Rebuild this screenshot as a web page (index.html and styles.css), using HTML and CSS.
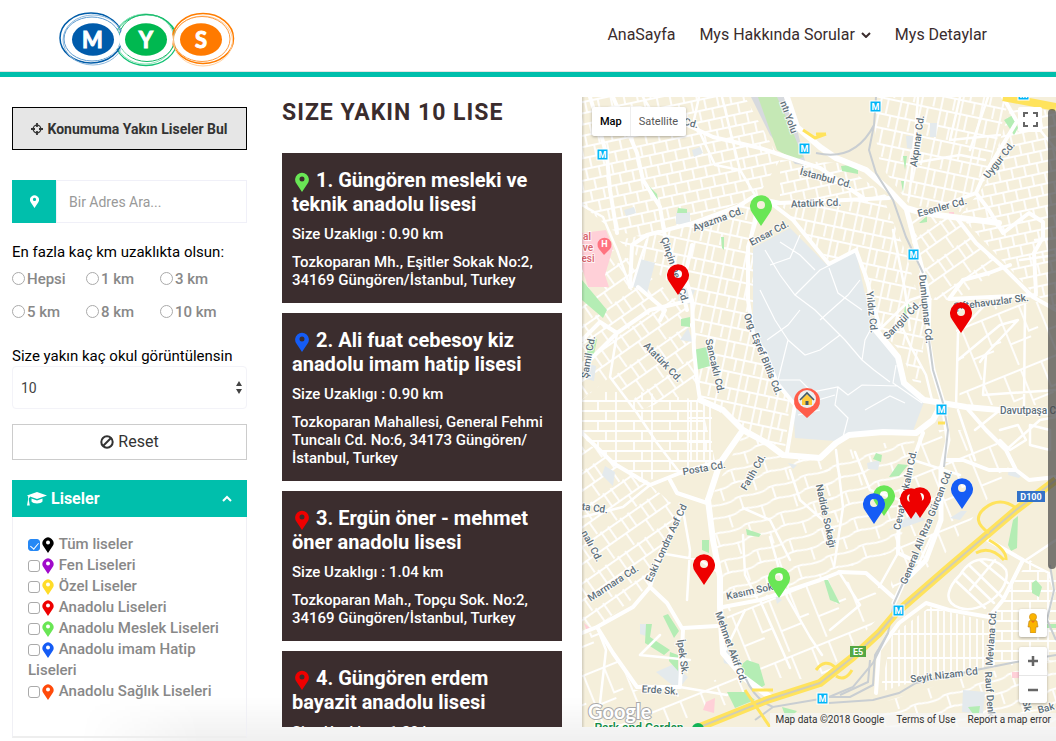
FILE: index.html
```html
<!DOCTYPE html>
<html lang="tr">
<head>
<meta charset="utf-8">
<meta name="viewport" content="width=device-width, initial-scale=1">
<title>MYS - Liseler</title>
<link rel="stylesheet" href="styles.css">
</head>
<body>
<svg class="defs" aria-hidden="true">
  <symbol id="pin" viewBox="0 0 22 32"><path fill="currentColor" fill-rule="evenodd" d="M11 32 2 18.500A11 11 0 1 1 20 18.500ZM11 7a4 4 0 1 0 0 8 4 4 0 0 0 0-8Z"/></symbol>
</svg>

<header class="site-header">
  <a class="logo" href="#" aria-label="MYS">
    <svg viewBox="59 11 177 57" width="177" height="57">
      <g fill="none">
        <ellipse cx="146" cy="40" rx="31" ry="25.500" stroke="#12c274" stroke-width="1.300"/>
        <ellipse cx="145" cy="39" rx="29" ry="25" stroke="#8fe3b9"/>
        <ellipse cx="147" cy="38" rx="28" ry="23.500" stroke="#12b865"/>
        <ellipse cx="203" cy="38.500" rx="30.500" ry="25" stroke="#ff7d00" stroke-width="1.500"/>
        <ellipse cx="203" cy="41" rx="29.500" ry="25" stroke="#ffd0a0"/>
        <ellipse cx="202" cy="39" rx="28" ry="22.500" stroke="#ff9a3c"/>
        <ellipse cx="91" cy="38" rx="31" ry="25" stroke="#005ca8" stroke-width="1.500"/>
        <ellipse cx="93" cy="40" rx="30" ry="25" stroke="#8fb9dd"/>
        <ellipse cx="92" cy="39" rx="28" ry="22" stroke="#5d9bd0"/>
      </g>
      <ellipse cx="93" cy="39.500" rx="27" ry="20.500" fill="#fff"/>
      <ellipse cx="146" cy="39.500" rx="27" ry="20.500" fill="#fff"/>
      <ellipse cx="201" cy="39.500" rx="27" ry="20.500" fill="#fff"/>
      <ellipse cx="93" cy="39.500" rx="21" ry="16.300" fill="#005bab"/>
      <ellipse cx="146" cy="39.500" rx="21" ry="16.300" fill="#00b850"/>
      <ellipse cx="201" cy="39.500" rx="21" ry="16.300" fill="#ff7a00"/>
      <g class="logo-letter"><text x="92.500" y="47.500">M</text><text x="146" y="47.500">Y</text><text x="201" y="47.500">S</text></g>
    </svg>
  </a>
  <nav class="nav">
    <a href="#">AnaSayfa</a>
    <a href="#">Mys Hakkında Sorular <svg class="caret" viewBox="0 0 10 6"><path d="M1 1l4 4 4-4"/></svg></a>
    <a href="#">Mys Detaylar</a>
  </nav>
</header>

<main class="layout">
  <form class="sidebar">
    <button class="locate" type="button">
      <svg viewBox="0 0 12 12" width="12" height="12"><circle cx="6" cy="6" r="3.800" fill="none" stroke="currentColor" stroke-width="1.300"/><path d="M6 0v4M6 8v4M0 6h4M8 6h4" stroke="currentColor" stroke-width="1.800"/></svg>
      Konumuma Yakın Liseler Bul
    </button>
    <div class="search">
      <span class="search-icon"><svg viewBox="0 0 22 32" width="9" height="13"><use href="#pin"/></svg></span>
      <input type="text" placeholder="Bir Adres Ara..." aria-label="Adres">
    </div>
    <fieldset class="distance">
      <legend>En fazla kaç km uzaklıkta olsun:</legend>
      <div class="options">
        <label><input type="radio" name="km">Hepsi</label>
        <label><input type="radio" name="km">1 km</label>
        <label><input type="radio" name="km">3 km</label>
        <label><input type="radio" name="km">5 km</label>
        <label><input type="radio" name="km">8 km</label>
        <label><input type="radio" name="km">10 km</label>
      </div>
    </fieldset>
    <label class="field-label" for="count">Size yakın kaç okul görüntülensin</label>
    <div class="select">
      <select id="count"><option>10</option><option>20</option></select>
      <svg viewBox="0 0 6 13" width="6" height="13"><path d="M3 0l3 5H0zM3 13l3-5H0z" fill="#444"/></svg>
    </div>
    <button class="reset" type="reset">
      <svg viewBox="0 0 14 14" width="14" height="14"><g fill="none" stroke="currentColor" stroke-width="2"><circle cx="7" cy="7" r="5.700"/><path d="M3 11l8-8"/></g></svg>
      Reset
    </button>
    <section class="panel">
      <button class="panel-head" type="button">
        <svg viewBox="0 0 20 14" width="20" height="14" fill="currentColor"><path d="M10 0l10 3.500-10 3.500L3 4.600v.700L1.800 6v2l1 5.500H0L1 8V6l.2-1.500L0 3.500z"/><path d="M4.500 6.500L10 8.400l5.500-1.900v3C14 12 6 12 4.500 9.500z"/></svg>
        <span>Liseler</span>
        <svg class="chevron" viewBox="0 0 10 7" width="10" height="7"><path d="M1 6l4-4 4 4" fill="none" stroke="currentColor" stroke-width="2"/></svg>
      </button>
      <div class="panel-body">
        <label class="black"><input type="checkbox" checked><svg><use href="#pin"/></svg> <span>Tüm liseler</span></label>
        <label class="purple"><input type="checkbox"><svg><use href="#pin"/></svg> <span>Fen Liseleri</span></label>
        <label class="yellow"><input type="checkbox"><svg><use href="#pin"/></svg> <span>Özel Liseler</span></label>
        <label class="red"><input type="checkbox"><svg><use href="#pin"/></svg> <span>Anadolu Liseleri</span></label>
        <label class="green"><input type="checkbox"><svg><use href="#pin"/></svg> <span>Anadolu Meslek Liseleri</span></label>
        <label class="blue"><input type="checkbox"><svg><use href="#pin"/></svg> <span>Anadolu imam Hatip Liseleri</span></label>
        <label class="orange"><input type="checkbox"><svg><use href="#pin"/></svg> <span>Anadolu Sağlık Liseleri</span></label>
      </div>
    </section>
  </form>

  <section class="results">
    <h2>SIZE YAKIN 10 LISE</h2>
    <div class="cards">
      <article class="card"><h3><svg class="green"><use href="#pin"/></svg> 1. Güngören mesleki ve teknik anadolu lisesi</h3><p>Size Uzaklıgı : 0.90 km</p><p>Tozkoparan Mh., Eşitler Sokak No:2, 34169 Güngören/İstanbul, Turkey</p></article>
      <article class="card"><h3><svg class="blue"><use href="#pin"/></svg> 2. Ali fuat cebesoy kiz anadolu imam hatip lisesi</h3><p>Size Uzaklıgı : 0.90 km</p><p>Tozkoparan Mahallesi, General Fehmi Tuncalı Cd. No:6, 34173 Güngören/<wbr>İstanbul, Turkey</p></article>
      <article class="card"><h3><svg class="red"><use href="#pin"/></svg> 3. Ergün öner - mehmet öner anadolu lisesi</h3><p>Size Uzaklıgı : 1.04 km</p><p>Tozkoparan Mah., Topçu Sok. No:2, 34169 Güngören/İstanbul, Turkey</p></article>
      <article class="card"><h3><svg class="red"><use href="#pin"/></svg> 4. Güngören erdem bayazit anadolu lisesi</h3><p>Size Uzaklıgı : 1.20 km</p></article>
    </div>
  </section>

  <section class="map" aria-label="Harita">
    <svg class="map-canvas" viewBox="582 97 474 630" preserveAspectRatio="xMinYMin slice">
      <defs>
        <pattern id="ga" width="26" height="22" patternUnits="userSpaceOnUse" patternTransform="rotate(-12)"><path d="M0 1H26M0 12H26M5 1V12M18 1V12M11 12V23M24 12V23" class="lane"/></pattern>
        <pattern id="gb" width="20" height="30" patternUnits="userSpaceOnUse" patternTransform="rotate(12)"><path d="M0 2H20M0 18H20M3 0V30M10 2V18M15 18V32" class="lane"/></pattern>
        <pattern id="gc" width="36" height="20" patternUnits="userSpaceOnUse"><path d="M0 1H36M0 11H36M4 0V20M22 1V11M30 11V21" class="lane"/></pattern>
        <pattern id="gd" width="24" height="30" patternUnits="userSpaceOnUse" patternTransform="rotate(-35)"><path d="M0 2H24M0 16H24M4 0V16M15 16V32M19 0V16" class="lane"/></pattern>
        <pattern id="ge" width="13" height="48" patternUnits="userSpaceOnUse"><path d="M2 0V48M8 0V48M0 10H13M0 34H13" class="lane"/></pattern>
        <pattern id="gf" width="34" height="28" patternUnits="userSpaceOnUse" patternTransform="rotate(-18)"><path d="M0 2C9-3 18 7 34 2M0 15C9 10 18 20 34 15M6 2V15M24 15V30" class="lane"/></pattern>
        <pattern id="gg" width="40" height="60" patternUnits="userSpaceOnUse" patternTransform="rotate(-22)"><path d="M0 5H40M8 5V60M30 5V32H40M8 38H30" class="lane"/></pattern>
      </defs>
      <rect x="582" y="97" width="474" height="630" fill="#f5efdb"/>

      <!-- neighbourhood street grids -->
      <path fill="url(#ga)" d="M582 97H745L780 160 758 196 680 225 645 238 612 230 582 205Z"/>
      <path fill="url(#gb)" d="M618 240 680 228 754 200V330L770 350 790 400 785 450 742 428 700 398 690 300Z"/>
      <path fill="url(#ga)" d="M780 160 840 163 890 198 780 200Z"/>
      <path fill="url(#gd)" d="M582 250 618 250 690 310 697 390 640 410 610 377 582 400Z"/>
      <path fill="url(#gc)" d="M582 392H640L700 400 715 460 680 473 640 482 582 437Z"/>
      <path fill="url(#ge)" d="M688 402H712V462H686Z"/>
      <path fill="url(#gd)" d="M582 440 650 485 682 512 650 585 600 625 582 630Z"/>
      <path fill="url(#gg)" d="M582 635 600 630 635 690 690 690 740 670 770 690 660 727H582Z"/>
      <path fill="url(#gf)" d="M744 432 785 456 830 456 840 570 790 595 722 600 710 500Z"/>
      <path fill="url(#gb)" d="M780 204 884 200 905 250 925 320 920 398 900 350 874 325 858 250 830 262Z"/>
      <path fill="url(#gb)" d="M870 97H1010L985 180 960 212 910 205 880 165Z"/>
      <path fill="url(#ga)" d="M1010 110H1056V310L1030 290 960 216 985 185Z"/>
      <path fill="url(#gd)" d="M906 215 955 218 1000 268 955 300 925 300Z"/>
      <path fill="url(#gg)" d="M955 310 1056 300V405H960Z"/>
      <path fill="url(#gf)" d="M822 455 915 437 900 550 840 570Z"/>
      <path fill="url(#gg)" d="M724 608 830 575 895 600 820 680 745 676Z"/>
      <path fill="url(#gg)" d="M920 430 990 430 1010 470 940 560 890 590 900 530Z"/>
      <path fill="url(#ge)" d="M892 635 930 607 990 622 990 668 920 680 880 692Z"/>
      <path fill="url(#gf)" d="M880 703 975 674 1056 660V727H870Z"/>
      <path fill="url(#gc)" d="M990 615 1030 560 1056 580V660L990 668Z"/>

      <!-- institutional grounds -->
      <g fill="#e4eaed">
        <path d="M753 248 790 228 828 266 856 251 864 290 876 333 898 357 904 383 924 402 913 431 880 430 850 435 835 441 795 438 793 403 777 380 768 353 753 330Z"/>
        <path d="M640 259 655 263 647 293 632 286ZM676 213 690 212 690 224 676 224ZM679 288 695 290 690 304 678 302ZM624 210 634 207 636 213 626 216ZM692 150 700 147 703 153 694 157ZM605 466 615 472 613 486 602 475ZM586 363 596 366 594 381 586 379ZM680 340 688 328 693 342ZM656 672 674 664 688 677 678 690ZM721 645 728 645 733 666 724 663ZM640 624 650 624 646 636 640 634ZM775 595 782 600 777 604ZM888 530 916 512 925 520 905 527ZM961 511 967 511 960 520 950 518ZM867 463 880 460 878 470 868 469ZM963 690 985 692 983 714 962 712ZM906 136 913 136 912 149 907 148ZM930 123 937 123 936 137 930 137ZM1009 468 1023 473 1019 478 1008 475ZM788 463 797 465 793 469Z"/>
      </g>
      <path fill="#d7dade" d="M751 97H789L806 165 795 164 770 135Z"/>
      <g fill="#b4edb4">
        <path fill="#c5e8b5" d="M758 97H777L792 130 803 157 795 160 777 150Z"/>
        <path d="M582 280 607 310 603 318 582 300ZM693 350 707 347 710 366 696 370ZM588 341 597 339 593 360 587 355ZM681 319 690 317 690 327 681 326ZM646 624 652 624 650 637 670 650 664 655 645 643ZM663 616 668 614 679 631 674 638ZM670 652 678 655 678 671 669 661ZM741 665 747 660 759 664 765 685 757 690 746 678ZM727 692 745 692 755 700 735 708ZM782 707 797 711 787 721ZM889 477 898 464 908 465 899 476ZM1004 120 1013 115 1018 128 1014 135ZM1008 545 1013 520 1018 516 1017 548 1011 551ZM1032 583 1036 580 1042 587 1039 597 1032 593ZM841 166 850 165 858 170 858 174 842 171ZM919 223 927 216 927 222 921 223ZM903 156 907 156 905 170ZM901 181 904 181 903 192ZM678 208 687 209 687 213 677 213ZM640 176 646 183 657 194 658 200 649 190ZM721 237 724 237 724 250 722 248ZM824 580 828 580 840 604 830 600ZM702 540 709 540 709 553 702 550ZM746 529 761 534 759 537 747 535ZM876 453 882 455 881 462 873 459ZM906 300 911 308 903 318ZM963 217 993 221 993 224 964 220ZM968 707 980 706 979 713 973 714ZM1044 624H1056V628H1044Z"/>
      </g>
      <g fill="#ffd0d8"><path d="M582 233 606 230 613 248 605 275 609 287 588 287 582 268ZM949 212 954 212 954 217 949 216ZM706 702 715 698 714 713 703 710ZM584 623 590 628 587 632ZM1012 672H1019V678H1012Z"/></g>
      <g class="path-thin">
        <path d="M765 250 780 275 795 295 820 270 830 265M795 295 815 310 845 340 862 360 874 370 890 382M767 340 788 325 800 310M788 340 805 355 820 350 840 335M788 340 778 380 800 380 812 392 838 387 848 395 862 385 898 386M862 360 865 340 873 325M820 320 848 295 860 280M760 290 775 320 788 340M838 387 835 405 848 418 843 437M865 410 890 396 905 403M818 400 835 395M798 415 820 410M829 268 838 293 862 310M896 365 893 383 922 403M780 242 800 255 815 270M770 265 790 258 800 235"/>
      </g>

      <!-- minor roads -->
      <g class="road minor">
        <path d="M582 205 603 217 617 250 630 287M647 240 640 260 632 287M699 97 694 120 715 165 740 170M722 97 730 130 740 170 755 195M617 333 610 377 637 413 657 443 680 473M643 97 660 125 683 123M582 517 623 507 650 485M660 553 700 560 718 572M683 510 690 550 687 600M597 627 606 650 600 703 595 727M660 635 640 655 690 660M680 687 727 695M770 537 787 597 810 637 822 655M743 508 770 520 790 560M790 470 800 500 834 530M743 535 745 575 757 598M836 450 843 507 834 567M866 573 893 597M855 452 870 490 900 500M913 460 960 475M898 553 879 587M919 563 932 535M839 572 860 605 830 630M724 653 745 610M760 600 790 668M898 318 910 345 926 375 932 400M876 333 910 300 925 295M956 407 958 333 985 305M958 360 1000 325 1018 320 985 355 980 362M986 355 983 395 1056 390M1025 305 1024 405M1035 240 1056 238M913 163 960 155 985 160M960 97 950 140 1000 135M988 97 970 150M1024 110 1056 150M1020 260 1056 255M958 410 975 460M1006 450 1040 420 1056 417M975 430 1000 410M918 97 913 163 909 197M893 230 905 290 910 330M1026 560 1056 540M1023 560 1049 573 1054 590 1047 620"/>
        <path d="M960 575C975 550 1000 560 1006 570C1012 590 980 615 960 608C940 602 950 585 960 575M955 580 985 608M962 572 994 603M970 566 1002 597M980 560 1008 583M1000 430 1018 425 1026 440 1010 450 1000 440M1030 425 1050 430 1050 450 1030 445ZM970 590 995 560"/>
      </g>

      <!-- main roads -->
      <g class="road">
        <path d="M590 97 598 123 607 157 610 190 617 233M613 97 637 153 643 180 660 207 665 237 677 270 687 310M600 110 640 108 683 123 713 137 760 148 787 157 820 168 866 200M630 287 632 245 647 235 693 223 737 207 753 197 780 203 889 198M767 200 793 220 829 264 856 250 866 277 879 325M755 197 756 220 748 247 748 300 753 333 767 357 777 383 795 405 787 453M582 340 600 322 617 333 650 310 692 300M617 333 590 360 582 364M582 433 613 463 650 485 680 473 723 460M670 480 677 493 707 503M692 245 685 275 692 300 694 350 697 380 700 400M638 287 665 310 660 320"/>
        <path d="M683 510 660 553 650 587 633 607 597 627 582 633M597 627 613 653 637 687 680 687 683 630 667 603 650 587M683 628 717 626M723 607 760 600 820 580 840 572"/>
        <path d="M1016 123 983 177 976 193 923 213M976 193 989 210 1003 233 1016 223 1029 213 1043 222 1043 237 1034 253 1036 293M956 217 976 243 1003 267 1033 297 1056 310M1036 295 949 299 963 280 989 273 1010 265M1003 97 1016 120M966 407 986 430 1006 450 1016 470M946 460 963 460 989 470 1016 470 1029 480 1056 477M923 433 913 460 899 507 898 553 919 563M839 572 866 573 893 597M983 537 1023 560 1003 600 989 617 949 610 926 603 899 623 879 650 876 693"/>
        <path d="M708 500 713 540 720 577 720 607 723 653 743 677 770 697" stroke-width="6"/>
        <path d="M743 430 720 463 708 500M700 400 723 410 743 430 767 443 783 455 820 458 836 443 849 435 883 432 916 433 933 420 942 403M874 328 898 357 904 383 924 400 966 407 999 410 1056 413" stroke-width="6"/>
        <path d="M787 97 797 127 820 147 836 158 866 170 889 190 906 208 923 213 953 217 999 223" stroke-width="6"/>
        <path d="M906 208 923 273 929 300 928 340 933 370 943 403 948 440 941 470 941 520 926 560 903 583 894 603" stroke-width="5"/>
      </g>

      <!-- rail and highways -->
      <g fill="none" stroke="#c9ced2" stroke-width="2">
        <path d="M876 97 874 125 869 150 876 173 893 200 906 237 923 273M929 340 933 370 943 403 948 430 944 467M903 583 894 603 888 633 873 663 853 687 829 697M874 125Q855 162 816 153M829 703 873 700 899 693 916 683 976 670 1016 662 1056 655M745 677Q755 700 773 707L820 699M773 707 755 720"/>
        <path d="M888 633 875 655 873 685 850 697 829 697M870 660 868 682 840 695M1050 565 1054 590 1047 620 1056 640"/>
      </g>
      <g fill="none" stroke-linejoin="round">
        <path class="highway" d="M700 727 767 700 820 683 853 657 879 633 896 613 949 567 989 533 1016 510 1056 480"/>
        <path class="median" d="M700 727 767 700 820 683 853 657 879 633 896 613 949 567 989 533 1016 510 1056 480"/>
        <path class="highway" d="M1003 97 1056 107"/>
        <path class="ramp" d="M989 533Q970 520 985 508T1016 508M989 540Q1007 550 1006 560M976 553Q990 545 1004 560M816 670Q825 658 835 667M836 676Q845 682 852 670M745 690 755 705 770 727M803 130 815 138 826 134M816 134H826M938 423H945M752 690 773 690"/>
      </g>

      <g class="street">
        <text transform="translate(691 123) rotate(15)">Cd.</text>
        <text transform="translate(789 117) rotate(70)">ntı Yolu</text>
        <text transform="translate(826 178) rotate(15)">İstanbul Cd.</text>
        <text transform="translate(816 203) rotate(-2)">Atatürk Cd.</text>
        <text transform="translate(718 219) rotate(-20)">Ayazma Cd.</text>
        <text transform="translate(769 233) rotate(-28)">Ensar Cd.</text>
        <text transform="translate(675 270) rotate(72)">Çinçin Dere Cd.</text>
        <text transform="translate(917 141) rotate(-82)">Akpınar Cd.</text>
        <text transform="translate(999 160) rotate(-52)">Uygur Cd.</text>
        <text transform="translate(942 207) rotate(-15)">Esenler Cd.</text>
        <text transform="translate(991 302) rotate(-7)">Çiftehavuzlar Sk.</text>
        <text transform="translate(926 309) rotate(84)">Dumlupınar Cd.</text>
        <text transform="translate(872 312) rotate(84)">Yıldız Cd.</text>
        <text transform="translate(902 320) rotate(-46)">Sarıgül Cd.</text>
        <text transform="translate(763 354) rotate(68)">Org. Eşref Bitlis Cd.</text>
        <text transform="translate(715 366) rotate(77)">Sancaklı Cd.</text>
        <text transform="translate(663 362) rotate(46)">Atatürk Cd.</text>
        <text transform="translate(588 357) rotate(-80)">Şamil Cd.</text>
        <text transform="translate(704 468) rotate(-10)">Posta Cd.</text>
        <text transform="translate(753 472) rotate(-60)">Fatih Cd.</text>
        <text transform="translate(595 508) rotate(8)">ta Cd.</text>
        <text transform="translate(592 546) rotate(62)">nalı Cd.</text>
        <text transform="translate(613 583) rotate(-33)">Marmara Cd.</text>
        <text transform="translate(666 543) rotate(-65)">Eski Londra Asf Cd</text>
        <text transform="translate(751 591) rotate(-12)">Kasım Sok.</text>
        <text transform="translate(731 647) rotate(70)">Mehmet Akif Cd.</text>
        <text transform="translate(683 657) rotate(82)">İpek Sk.</text>
        <text transform="translate(660 690) rotate(4)">Erde Sk.</text>
        <text transform="translate(826 516) rotate(78)">Nadide Sokağı</text>
        <text transform="translate(905 490) rotate(-78)">Cevat Açıkalın Cd.</text>
        <text transform="translate(926 527) rotate(-68)">General Ali Rıza Gürcan Cd.</text>
        <text transform="translate(1028 410)">Davutpaşa C</text>
        <text transform="translate(944 675) rotate(-7)">Seyit Nizam Cd</text>
        <text transform="translate(991 638) rotate(-86)">Mevlana Cd.</text>
        <text transform="translate(990 696) rotate(86)">Rauf Denkt</text>
        <text transform="translate(1027 706) rotate(80)">Sk</text>
        <text transform="translate(1046 708) rotate(-15)">Bak</text>
        <g class="hospital"><text x="587" y="236">al</text><text x="588" y="247">ve</text><text x="588" y="258">esi</text></g>
        <text class="park" x="639" y="728">Park and Garden</text>
      </g>
      <circle cx="698" cy="729" r="6" fill="#12b357"/>
      <path fill="#ff7380" d="M604 255 599 249A7 7 0 1 1 610 249Z"/><text class="badge" x="604.500" y="247">H</text>
      <g class="metro">
        <g id="m1"><rect x="597" y="149" width="11" height="11"/><text x="602.500" y="158">M</text></g>
        <use href="#m1" x="202" y="-6"/><use href="#m1" x="273" y="-48"/><use href="#m1" x="311" y="100"/><use href="#m1" x="339" y="255"/><use href="#m1" x="296" y="456"/><use href="#m1" x="220" y="544"/><use href="#m1" x="421" y="-60"/>
      </g>
      <rect x="1017" y="491" width="28" height="11" fill="#3372c8"/><text class="badge" x="1031" y="500">D100</text>
      <rect x="850" y="646" width="16" height="11" fill="#55a844"/><text class="badge" x="858" y="655">E5</text>

      <!-- school markers -->
      <g class="green"><use href="#pin" x="750" y="194" width="22" height="32"/><use href="#pin" x="873" y="484" width="22" height="32"/><use href="#pin" x="768" y="566" width="22" height="32"/></g>
      <g class="red"><use href="#pin" x="667" y="263" width="22" height="32"/><use href="#pin" x="950" y="301" width="22" height="32"/><use href="#pin" x="900" y="487" width="22" height="32"/><use href="#pin" x="909" y="486" width="22" height="32"/><use href="#pin" x="693" y="553" width="22" height="32"/></g>
      <g class="blue"><use href="#pin" x="863" y="492" width="22" height="32"/><use href="#pin" x="951" y="477" width="22" height="32"/></g>
      <g><path fill="#ff5d4a" d="M807 418 796 408A13 13 0 1 1 818 408Z"/><circle cx="807" cy="399" r="9" fill="#eceff1"/><path d="M802 399 807 394 812 399V405H802Z" fill="#ffca3a"/><path d="M800 400 807 393 814 400" fill="none" stroke="#455a64" stroke-width="1.600"/><path d="M805.500 401H808.500V405H805.500Z" fill="#455a64"/></g>
      <text class="google" x="588" y="719">Google</text>
    </svg>
    <div class="map-type"><button class="active" type="button">Map</button><button type="button">Satellite</button></div>
    <button class="fullscreen" type="button" aria-label="Tam ekran"><svg viewBox="0 0 15 15" width="15" height="15"><path d="M1 5V1h4M10 1h4v4M14 10v4h-4M5 14H1v-4" fill="none" stroke="#666" stroke-width="2"/></svg></button>
    <div class="map-tools">
      <button class="pegman" type="button" aria-label="Sokak görünümü"><svg viewBox="0 0 12 20" width="12" height="20"><path d="M2 8Q6 5.500 10 8L11 14 9 14 8.500 20H3.500L3 14 1 14Z" fill="#fbb400" stroke="#b8801d" stroke-width=".6"/><circle cx="6" cy="4" r="3.600" fill="#fbb400" stroke="#c98a14" stroke-width=".6"/><path d="M4 8H8L6 10Z" fill="#e8711a"/></svg></button>
      <div class="zoom">
        <button type="button" aria-label="Yakınlaştır"><svg viewBox="0 0 12 12" width="12" height="12"><path d="M6 1v10M1 6h10" stroke="#666" stroke-width="2.500"/></svg></button>
        <button type="button" aria-label="Uzaklaştır"><svg viewBox="0 0 12 12" width="12" height="12"><path d="M1 6h10" stroke="#666" stroke-width="2.500"/></svg></button>
      </div>
    </div>
    <div class="credits"><span>Map data ©2018 Google</span><a href="#">Terms of Use</a><a href="#">Report a map error</a></div>
    <div class="scroll-thumb"></div>
  </section>
</main>
</body>
</html>
```

FILE: styles.css
```css
* { box-sizing: border-box; }
body {
  margin: 0;
  min-height: 100vh;
  position: relative;
  font: 15px/20px Roboto, "Noto Sans", sans-serif;
  color: #3a2c2d;
  background: #fff;
}
body::before {
  content: "";
  position: absolute;
  z-index: -1;
  inset: auto 0 0 80px;
  height: 45px;
  background: linear-gradient(rgba(0, 0, 0, 0), rgba(0, 0, 0, .06));
  -webkit-mask-image: linear-gradient(to right, transparent, #000 120px);
  mask-image: linear-gradient(to right, transparent, #000 120px);
}
button, input, select { font: inherit; color: inherit; margin: 0; }
button { cursor: pointer; border: 0; padding: 0; background: none; }
.defs { position: absolute; width: 0; height: 0; }

.black { color: #000; }
.purple { color: #a10acb; }
.yellow { color: #ffdc28; }
.red { color: #ee0000; }
.green { color: #69e655; }
.blue { color: #155cf5; }
.orange { color: #ff4a0a; }

.site-header {
  display: flex;
  align-items: center;
  justify-content: space-between;
  height: 77px;
  padding: 0 69px 0 59px;
  border-bottom: 5px solid #00bfac;
  box-shadow: inset 0 -1px #e4e4e4;
}
.logo { display: block; padding-top: 6px; }
.logo svg { display: block; }
.logo-letter { font: bold 22px Lato, sans-serif; fill: #fff; stroke: #fff; text-anchor: middle; }
.nav { display: flex; gap: 24px; font-size: 16px; margin-top: -2px; }
.nav a { color: #3a2c2d; text-decoration: none; }
.caret { width: 10px; height: 6px; margin-left: 2px; vertical-align: 2px; fill: none; stroke: #3a2c2d; stroke-width: 2; }

.layout {
  display: grid;
  grid-template-columns: 235px 280px minmax(0, 1fr);
  padding: 20px 0 3px 12px;
}
.sidebar { padding-top: 10px; }
.locate {
  display: flex;
  align-items: center;
  justify-content: center;
  gap: 4px;
  width: 100%;
  height: 43px;
  border: 1px solid #000;
  background: #e6e6e6;
  color: #333;
  font-size: 14px;
  font-weight: bold;
}
.search { display: flex; height: 43px; margin-top: 30px; }
.search-icon { display: grid; place-items: center; width: 44px; background: #00bfac; color: #fff; }
.search input { flex: 1; min-width: 0; padding: 0 12px; border: 1px solid #f0f0f8; background: #fff; font-size: 14px; }
.search input::placeholder { color: #999; }
.distance { margin: 19px 0 0; padding: 0; border: 0; }
.distance legend { padding: 0; color: #000; }
.options { display: grid; grid-template-columns: repeat(3, 74px); grid-auto-rows: 33px; }
.options label { display: flex; align-items: center; gap: 2px; color: #888; font-weight: 500; }
.options input { width: 13px; height: 13px; appearance: none; border: 1px solid #aaa; border-radius: 50%; background: #fff; }
.options input:checked { background: #2688f5; }
.field-label { display: block; margin-top: 18px; color: #000; }
.select { position: relative; }
.select select {
  display: block;
  width: 100%;
  height: 43px;
  padding: 0 8px;
  border: 1px solid #f3f3f8;
  border-radius: 4px;
  appearance: none;
  background: #fff;
  color: #444;
  font-size: 14px;
}
.select svg { position: absolute; right: 5px; top: 15px; pointer-events: none; }
.reset {
  display: flex;
  align-items: center;
  justify-content: center;
  gap: 4px;
  width: 100%;
  height: 36px;
  margin-top: 15px;
  border: 1px solid #ccc;
  background: #fff;
  color: #333;
  font-size: 16px;
}
.panel { margin-top: 20px; }
.panel-head {
  display: flex;
  align-items: center;
  gap: 4px;
  width: 100%;
  height: 37px;
  padding: 0 15px;
  background: #00bfac;
  color: #fff;
  font-weight: bold;
  font-size: 16px;
}
.chevron { margin-left: auto; }
.panel-body { padding: 17px 15px 34px; line-height: 21px; border: 1px solid #f0f0f5; border-top: 0; border-bottom: 2px solid #eee; }
.panel-body label { display: block; }
.panel-body span { color: #888; font-weight: 500; }
.panel-body input {
  position: relative;
  appearance: none;
  width: 12px;
  height: 12px;
  border: 1px solid #aaa;
  border-radius: 3px;
  background: #fff;
  vertical-align: -2px;
}
.panel-body input:checked { border-color: #2688f5; background: #2688f5; }
.panel-body input:checked::after {
  content: "";
  position: absolute;
  left: 3px;
  top: 1px;
  width: 4px;
  height: 7px;
  border: solid #fff;
  border-width: 0 1px 1px 0;
  transform: rotate(40deg);
}
.panel-body svg { width: 12px; height: 16px; margin: 0 1px 0 2px; vertical-align: -4px; }

.results { display: flex; flex-direction: column; height: calc(100vh - 111px); margin: 0 -35px 0 35px; overflow: hidden; }
.results h2 { flex: none; margin: 0 0 24px; font-size: 23px; line-height: 32px; letter-spacing: 1px; white-space: nowrap; }
.cards { display: flex; flex-direction: column; gap: 10px; min-height: 0; overflow: hidden; }
.card { flex: none; padding: 15px 10px 14px; background: #3b2d2e; color: #fff; }
.card h3 { margin: 0 0 9px; font-size: 20px; line-height: 24px; }
.card h3 svg { width: 14px; height: 20px; margin: 0 2px 0 3px; vertical-align: -5px; }
.card p { margin: 0; line-height: 18px; font-weight: 500; }
.card p + p { margin-top: 10px; }

.map { position: relative; height: calc(100vh - 111px); margin-left: 55px; overflow: hidden; }
.map::after { content: ""; position: absolute; inset: 0 auto 0 0; width: 3px; background: linear-gradient(to right, rgba(0, 0, 0, .15), transparent); }
.map-canvas { display: block; width: 100%; height: 100%; }
.lane { fill: none; stroke: #fff; stroke-width: 1.8; }
.path-thin { fill: none; stroke: #fff; stroke-width: 1.2; }
.road { fill: none; stroke: #fff; stroke-width: 4; stroke-linejoin: round; stroke-linecap: round; }
.minor { stroke-width: 2.5; }
.highway { stroke: #ffe35c; stroke-width: 8; }
.median { stroke: #d2ceb4; stroke-width: 2; }
.ramp { stroke: #ffe35c; stroke-width: 3; }
.street text {
  font: 500 10px Roboto, sans-serif;
  fill: #5f707a;
  stroke: #fff;
  stroke-width: 2px;
  stroke-opacity: .8;
  paint-order: stroke;
  text-anchor: middle;
  dominant-baseline: central;
}
.street .hospital text { fill: #d9626c; }
.street .park { fill: #0f8c45; font-size: 12px; }
.metro rect { fill: #00b5f7; stroke: #fff; }
.metro text, .badge { font: bold 9px Roboto, sans-serif; fill: #fff; text-anchor: middle; }
.google { font: bold 20px Lato, sans-serif; fill: #fff; stroke: #aaa; stroke-width: 2px; paint-order: stroke; }

.map-type { position: absolute; left: 10px; top: 10px; display: flex; height: 29px; background: #fff; border-radius: 2px; box-shadow: 0 1px 3px rgba(0, 0, 0, .3); font-size: 11px; }
.map-type button { padding: 0 8px; color: #565656; }
.map-type .active { color: #000; font-weight: 500; border-right: 1px solid #eee; }
.fullscreen { position: absolute; right: 14px; top: 10px; width: 24px; height: 25px; display: grid; place-items: center; background: #fff; border-radius: 2px; }
.map-tools { position: absolute; right: 9px; bottom: 24px; width: 28px; }
.map-tools button { display: grid; place-items: center; width: 28px; height: 28px; }
.pegman, .zoom { background: #fff; border-radius: 2px; box-shadow: 0 1px 3px rgba(0, 0, 0, .3); }
.zoom { margin-top: 10px; }
.zoom button + button { border-top: 1px solid #e6e6e6; }
.credits { position: absolute; right: 0; bottom: 0; display: flex; gap: 12px; padding: 0 5px; background: rgba(245, 245, 245, .75); font-size: 10px; line-height: 14px; color: #333; }
.credits a { color: #333; text-decoration: none; }
.scroll-thumb { position: absolute; right: 0; top: 12px; width: 8px; height: 73%; border-radius: 4px; background: rgba(70, 70, 70, .7); }

@media (max-width: 860px) {
  .layout { grid-template-columns: 1fr; gap: 20px; padding: 20px 12px; }
  .results, .map { margin: 0; }
}
```
